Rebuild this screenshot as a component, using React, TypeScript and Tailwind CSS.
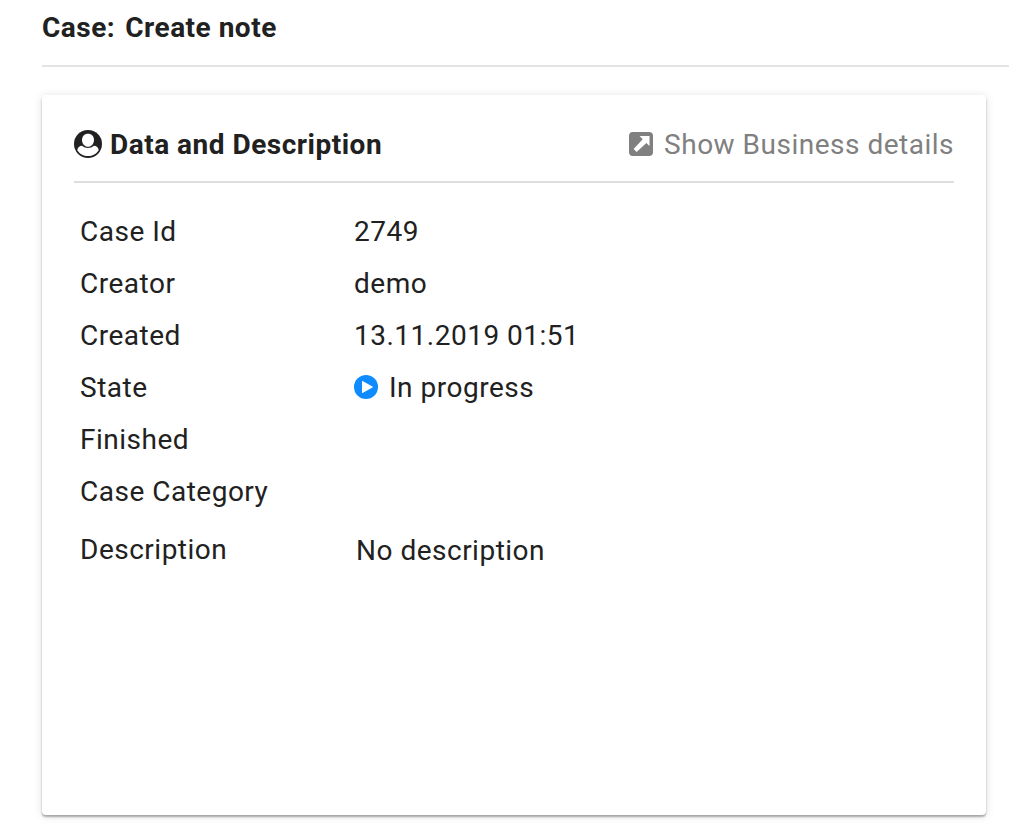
const rows = [
  { label: "Case Id", value: "2749" },
  { label: "Creator", value: "demo" },
  { label: "Created", value: "13.11.2019 01:51" },
  { label: "State", value: "In progress", icon: true },
  { label: "Finished", value: "" },
  { label: "Case Category", value: "" },
];

function UserIcon() {
  return (
    <svg viewBox="0 0 28 28" className="mt-px size-7">
      <circle cx="14" cy="14" r="14" fill="currentColor" />
      <path d="M8.2 15.8 C9.8 17.5 11.8 18 14 18 C16.2 18 18.2 17.5 19.8 15.8 C22.6 15.8 24.3 17.6 24.7 20.2 C22.4 23.8 18.5 26.1 14 26.1 C9.5 26.1 5.6 23.8 3.3 20.2 C3.7 17.6 5.4 15.8 8.2 15.8 Z" fill="white" />
      <path d="M14 3.8 C17.7 3.8 20 6.5 20 10 C20 13.7 17.5 16.8 14 16.8 C10.5 16.8 8 13.7 8 10 C8 6.5 10.3 3.8 14 3.8 Z" fill="white" />
    </svg>
  );
}

function ExternalIcon() {
  return (
    <svg viewBox="0 0 24 24" className="mt-[3px] size-6">
      <rect width="24" height="24" rx="4" fill="currentColor" />
      <path d="M10.6 4 H20.5 V14 L17.4 10.9 L7.6 20 L4.6 17 L13.7 7.2 Z" fill="white" />
    </svg>
  );
}

function PlayIcon() {
  return (
    <svg viewBox="0 0 24 24" className="-mt-0.5 size-6">
      <circle cx="12" cy="12" r="12" fill="#0d8bff" />
      <path d="M8 6.8 Q8 5.6 9 6.2 L18.5 11.4 Q19.3 12 18.5 12.6 L9 17.8 Q8 18.4 8 17.2 Z" fill="white" />
    </svg>
  );
}

export default function App() {
  return (
    <div className="h-[836px] w-full overflow-hidden bg-white pl-[42px] font-['Roboto',sans-serif] text-[28px] leading-[32px] tracking-[0.5px] text-[#212121]">
      <header className="flex h-[67px] gap-[10px] border-b-2 border-[#e4e4e4] pt-[12px] font-bold">
        <span>Case:</span>
        <span>Create note</span>
      </header>
      <section className="mt-[28px] h-[720px] w-[944px] rounded-[4px] bg-white px-8 shadow-[0_2px_2px_rgba(0,0,0,0.3),0_1px_10px_rgba(0,0,0,0.12)]">
        <div className="flex h-[88px] justify-between border-b-2 border-[#dedede] pt-[34px]">
          <h2 className="flex gap-2 font-bold">
            <UserIcon />
            <span>Data and Description</span>
          </h2>
          <button className="flex h-8 gap-[11px] text-[#808080]">
            <ExternalIcon />
            <span>Show Business details</span>
          </button>
        </div>
        <dl className="pt-[23px] pl-[6px]">
          {rows.map((r) => (
            <div key={r.label} className="flex h-[52px] items-center">
              <dt className="w-[274px]">{r.label}</dt>
              <dd className="flex items-center gap-[11px]">
                {r.icon && <PlayIcon />}
                <span>{r.value}</span>
              </dd>
            </div>
          ))}
          <div className="flex pt-4">
            <dt className="w-[276px]">Description</dt>
            <dd className="pt-px">No description</dd>
          </div>
        </dl>
      </section>
    </div>
  );
}
